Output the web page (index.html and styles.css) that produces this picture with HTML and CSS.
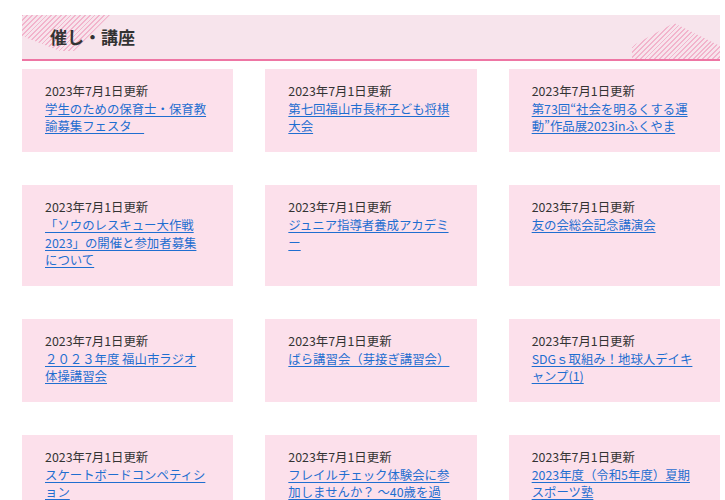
FILE: index.html
```html
<!DOCTYPE html>
<html lang="ja">
<head>
<meta charset="utf-8">
<title>催し・講座</title>
<link rel="stylesheet" href="styles.css">
</head>
<body>
<div class="wrap">
  <div class="heading">
    <span class="deco deco-left"></span>
    <span class="deco deco-right"></span>
    <h2 class="heading-title">催し・講座</h2>
  </div>
  <ul class="cards">
    <li class="card"><p class="date">2023年7月1日更新</p><a class="link" href="#">学生のための保育士・保育教諭募集フェスタ　</a></li>
    <li class="card"><p class="date">2023年7月1日更新</p><a class="link" href="#">第七回福山市長杯子ども将棋大会</a></li>
    <li class="card"><p class="date">2023年7月1日更新</p><a class="link" href="#">第73回“社会を明るくする運動”作品展2023inふくやま</a></li>
    <li class="card"><p class="date">2023年7月1日更新</p><a class="link" href="#">「ソウのレスキュー大作戦2023」の開催と参加者募集について</a></li>
    <li class="card"><p class="date">2023年7月1日更新</p><a class="link" href="#">ジュニア指導者養成アカデミー</a></li>
    <li class="card"><p class="date">2023年7月1日更新</p><a class="link" href="#">友の会総会記念講演会</a></li>
    <li class="card"><p class="date">2023年7月1日更新</p><a class="link" href="#">２０２３年度 福山市ラジオ体操講習会</a></li>
    <li class="card"><p class="date">2023年7月1日更新</p><a class="link" href="#">ばら講習会（芽接ぎ講習会）</a></li>
    <li class="card"><p class="date">2023年7月1日更新</p><a class="link" href="#">SDGｓ取組み！地球人デイキャンプ(1)</a></li>
    <li class="card"><p class="date">2023年7月1日更新</p><a class="link" href="#">スケートボードコンペティション</a></li>
    <li class="card"><p class="date">2023年7月1日更新</p><a class="link" href="#">フレイルチェック体験会に参加しませんか？ ～40歳を過ぎたら要チェック～</a></li>
    <li class="card"><p class="date">2023年7月1日更新</p><a class="link" href="#">2023年度（令和5年度）夏期スポーツ塾</a></li>
  </ul>
</div>
</body>
</html>
```

FILE: styles.css
```css
html, body {
  margin: 0;
  padding: 0;
  background: #ffffff;
}

body {
  font-family: "Noto Sans CJK JP", "Noto Sans", sans-serif;
  color: #333333;
}

.wrap {
  width: 698px;
  padding: 15px 0 0 22px;
}

.heading {
  position: relative;
  height: 44px;
  background: #f7e4ec;
  border-bottom: 2px solid #ee76a4;
  display: flex;
  align-items: center;
  overflow: hidden;
}

.deco {
  position: absolute;
  background: repeating-linear-gradient(135deg, #f2b4cc 0, #f2b4cc 1.3px, transparent 1.3px, transparent 3.4px);
}

.deco-left {
  left: 0;
  top: 0;
  width: 88px;
  height: 36px;
  clip-path: polygon(0 0, 88px 0, 52px 36px, 38px 36px, 0 21px);
}

.deco-right {
  right: 0;
  bottom: 0;
  width: 88px;
  height: 36px;
  clip-path: polygon(0 36px, 0 23px, 42px 0, 88px 23px, 88px 36px);
}

.heading-title {
  position: relative;
  margin: 0 0 2px 28px;
  font-size: 17px;
  font-weight: bold;
  color: #333333;
  line-height: 1;
  letter-spacing: 0;
}

.cards {
  list-style: none;
  margin: 8px 0 0;
  padding: 0;
  display: grid;
  grid-template-columns: repeat(3, 1fr);
  column-gap: 32px;
  row-gap: 33px;
}

.card {
  background: #fce0eb;
  padding: 14px 26px 16px 23px;
  font-size: 12.4px;
  line-height: 17.7px;
}

.date {
  margin: 0;
  color: #333333;
}

.link {
  color: #1f6ed0;
  text-decoration: underline;
  text-underline-offset: 2px;
}
```
